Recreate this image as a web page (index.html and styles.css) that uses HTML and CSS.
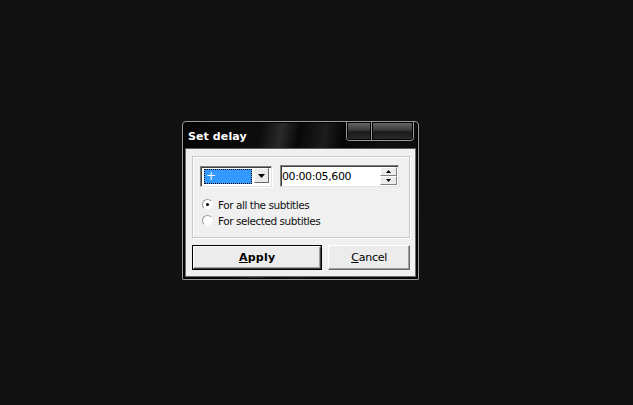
FILE: index.html
```html
<!DOCTYPE html>
<html>
<head>
<meta charset="utf-8">
<link rel="stylesheet" href="styles.css">
</head>
<body>
<div class="desk">
  <div class="win">
    <div class="titlebar">
      <span class="title">Set delay</span>
      <div class="tbtns">
        <span class="tb tb-min"></span>
        <span class="tb tb-close"></span>
      </div>
    </div>
    <div class="client">
      <div class="group">
        <div class="row">
          <div class="combo">
            <div class="combo-val"><span class="sel">+</span></div>
            <div class="combo-btn">
              <svg width="7" height="4" viewBox="0 0 7 4"><path d="M0 0H7L3.5 4Z" fill="#000"/></svg>
            </div>
          </div>
          <div class="edit">
            <span class="edit-text">00:00:05,600</span>
            <div class="spin">
              <span class="sp"><svg width="5" height="3" viewBox="0 0 5 3"><path d="M2.5 0L5 3H0Z" fill="#000"/></svg></span>
              <span class="sp"><svg width="5" height="3" viewBox="0 0 5 3"><path d="M0 0H5L2.5 3Z" fill="#000"/></svg></span>
            </div>
          </div>
        </div>
        <div class="radios">
          <label class="radio"><span class="dot on"></span>For all the subtitles</label>
          <label class="radio"><span class="dot"></span>For selected subtitles</label>
        </div>
      </div>
      <div class="buttons">
        <div class="btn btn-default"><span class="btn-in"><b><u>A</u>pply</b></span></div>
        <div class="btn btn-cancel"><span class="btn-in"><u>C</u>ancel</span></div>
      </div>
    </div>
  </div>
</div>
</body>
</html>
```
FILE: styles.css
```css
html, body {
  margin: 0;
  padding: 0;
  background: #111111;
  width: 633px;
  height: 405px;
  overflow: hidden;
  font-family: "DejaVu Sans", "Liberation Sans", sans-serif;
  font-size: 10px;
  color: #000;
}
.desk {
  padding: 121px 0 0 182px;
}
.win {
  width: 235px;
  height: 157px;
  border: 1px solid #9a9a9a;
  border-radius: 4px 4px 1px 1px;
  background: linear-gradient(100deg, #050505 0%, #0c0c0c 30%, #2a2a2a 38%, #080808 45%, #1c1c1c 55%, #050505 62%, #111 80%, #050505 100%);
  box-shadow: inset 0 0 0 1px #000;
  display: flex;
  flex-direction: column;
  box-sizing: content-box;
}
.titlebar {
  height: 26px;
  display: flex;
  align-items: flex-start;
  padding-left: 5px;
  padding-right: 4px;
}
.title {
  color: #fff;
  font-weight: bold;
  font-size: 11px;
  margin-top: 8px;
  letter-spacing: 0.1px;
}
.tbtns {
  margin-left: auto;
  display: flex;
  height: 18px;
  border: 1px solid #9a9a9a;
  border-top: none;
  border-radius: 0 0 4px 4px;
  overflow: hidden;
}
.tb {
  display: block;
  height: 18px;
  background: linear-gradient(#6a6a6a 0%, #3a3a3a 45%, #1a1a1a 55%, #2c2c2c 100%);
  box-shadow: inset 0 0 0 1px #000;
}
.tb-min { width: 24px; border-right: 1px solid #9a9a9a; }
.tb-close { width: 41px; }
.client {
  margin: 0 2px 2px 2px;
  flex: 1;
  background: #f0f0f0;
  border: 1px solid #6b6b6b;
  border-top-color: #5a5a5a;
  padding: 7px 5px 0 6px;
  display: flex;
  flex-direction: column;
}
.group {
  height: 82px;
  box-sizing: border-box;
  border: 1px solid #c8c8c8;
  box-shadow: inset 1px 1px 0 #fff, 1px 1px 0 #fff;
  padding: 8px 0 0 7px;
}
.row {
  display: flex;
  align-items: flex-start;
}
.combo {
  margin-top: 1px;
  width: 67px;
  height: 17px;
  border: 1px solid #808080;
  border-right-color: #e3e3e3;
  border-bottom-color: #e3e3e3;
  box-shadow: inset 1px 1px 0 #404040, 1px 1px 0 #fff;
  background: #fff;
  display: flex;
  padding: 1px 1px 1px 2px;
}
.combo-val {
  width: 48px;
  height: 15px;
  background: #3399ff;
  outline: 1px dotted #000;
  outline-offset: -1px;
  color: #fff;
  margin: 1px 0 0 1px;
}
.sel {
  display: block;
  padding-left: 2px;
  line-height: 14px;
  font-size: 12px;
}
.combo-btn {
  width: 15px;
  height: 15px;
  margin-left: 2px;
  background: #eaeaea;
  border-left: 1px solid #fff;
  border-top: 1px solid #fff;
  border-right: 1px solid #696969;
  border-bottom: 1px solid #696969;
  box-sizing: border-box;
  display: flex;
  align-items: center;
  justify-content: center;
}
.edit {
  margin-left: 8px;
  width: 117px;
  height: 20px;
  border: 1px solid #808080;
  border-right-color: #e3e3e3;
  border-bottom-color: #e3e3e3;
  box-shadow: inset 1px 1px 0 #404040;
  background: #fff;
  display: flex;
  align-items: center;
}
.edit-text {
  margin-left: 1px;
  font-size: 11px;
  letter-spacing: -0.4px;
}
.spin {
  margin-left: auto;
  margin-right: 1px;
  display: flex;
  flex-direction: column;
  width: 17px;
}
.sp {
  height: 9px;
  background: #ececec;
  border-top: 1px solid #fff;
  border-left: 1px solid #fff;
  border-right: 1px solid #808080;
  border-bottom: 1px solid #808080;
  box-sizing: border-box;
  display: flex;
  align-items: center;
  justify-content: center;
}
.radios {
  margin-top: 11px;
  padding-left: 2px;
  display: flex;
  flex-direction: column;
  gap: 3px;
}
.radio {
  display: flex;
  align-items: center;
  height: 13px;
  font-size: 10.5px;
  letter-spacing: -0.45px;
  color: #111;
}
.dot {
  width: 9px;
  height: 9px;
  border-radius: 50%;
  border: 1px solid #9a9a9a;
  border-right-color: #f4f4f4;
  border-bottom-color: #f4f4f4;
  background: #fff;
  margin-right: 5px;
  display: flex;
  align-items: center;
  justify-content: center;
}
.dot.on::after {
  content: "";
  width: 3px;
  height: 3px;
  border-radius: 50%;
  background: #000;
}
.buttons {
  margin-top: 7px;
  display: flex;
  gap: 6px;
}
.btn {
  height: 25px;
  box-sizing: border-box;
  display: flex;
}
.btn-in {
  flex: 1;
  display: flex;
  align-items: center;
  justify-content: center;
  font-size: 11px;
}
.btn-default {
  width: 131px;
  border: 1px solid #000;
}
.btn-default .btn-in {
  border-top: 1px solid #fff;
  border-left: 1px solid #fff;
  border-right: 1px solid #404040;
  border-bottom: 1px solid #404040;
  box-shadow: inset -1px -1px 0 #a0a0a0;
  background: #ececec;
}
.btn-default b { font-weight: bold; letter-spacing: 0.2px; }
.btn-cancel {
  width: 82px;
  height: 25px;
  border-top: 1px solid #fff;
  border-left: 1px solid #fff;
  border-right: 1px solid #696969;
  border-bottom: 1px solid #696969;
}
.btn-cancel .btn-in {
  background: #ececec;
  box-shadow: inset -1px -1px 0 #a0a0a0;
  letter-spacing: -0.2px;
}
```
